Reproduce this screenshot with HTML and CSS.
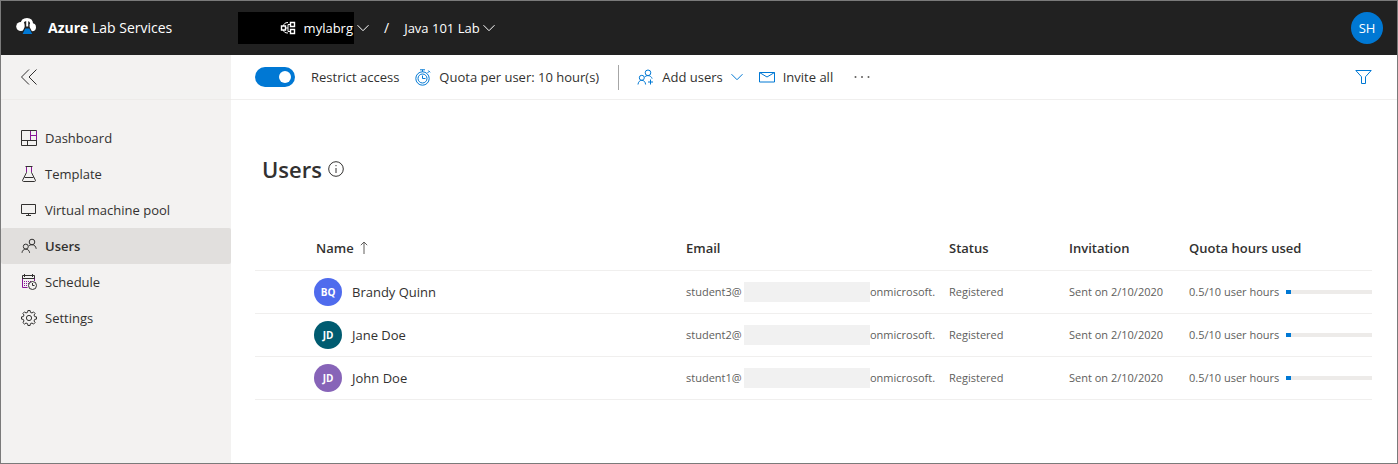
FILE: index.html
```html
<!DOCTYPE html>
<html lang="en">
<head>
<meta charset="utf-8">
<title>Users - Azure Lab Services</title>
<link rel="stylesheet" href="styles.css">
</head>
<body>
<svg class="sprite" aria-hidden="true">
  <symbol id="chevron" viewBox="0 0 12 8"><path d="M.5 1.2 6 6.7l5.5-5.5"/></symbol>
  <symbol id="people" viewBox="0 0 16 16"><circle cx="11" cy="4" r="2.8"/><circle cx="4.8" cy="8.6" r="2.5"/><path d="M1 14.8c.2-2.2 1.8-3.7 3.8-3.7s3.6 1.5 3.8 3.7M7.6 8.2C8.3 7.2 9.5 6.7 11 6.7c2.200 0 3.900 1.600 4.200 4.100"/></symbol>
</svg>
<header class="topbar">
  <div class="brand">
    <svg class="logo" width="20" height="17" viewBox="0 0 20 17" aria-hidden="true">
      <path d="M6 6.500C6.200 3 8 1.600 11 1.600S15.500 3 15.700 6.500" fill="none" stroke="#fff" stroke-width="3"/>
      <circle cx="4.800" cy="8.500" r="4.600" fill="#fff"/><circle cx="16" cy="9.200" r="4" fill="#fff"/>
      <path d="M8.600 4.500h5v4.500l4 7.500H5.200l3.400-7.500z" fill="#212121"/>
      <path d="M10.200 3h2v5.500h-2z" fill="#fff"/>
      <path d="M9.300 10.500h4l2.900 5.500H6.600z" fill="#0078d4"/>
    </svg>
    <span><b>Azure</b> Lab Services</span>
  </div>
  <nav class="crumbs" aria-label="Breadcrumb">
    <button class="crumb" type="button">
      <span class="group">
        <svg class="icon" width="16" height="14" viewBox="0 0 16 14" aria-hidden="true"><path d="M1.500 5h4v4h-4zM10.500 1.500h4v4h-4zM10.500 8.500h4v4h-4z" stroke-width="1.400"/><path d="M3.500 5C3.700 3 5 1.500 8 1.500M3.500 9c.2 2 1.500 3 4.500 3M5.500 7h2.500V3.500h2.500M8 7v3.500h2.500"/></svg>
        mylabrg
      </span>
      <svg class="icon" width="12" height="8" aria-hidden="true"><use href="#chevron"/></svg>
    </button>
    <span class="slash">/</span>
    <button class="crumb" type="button">Java 101 Lab <svg class="icon" width="12" height="8" aria-hidden="true"><use href="#chevron"/></svg></button>
  </nav>
  <button class="account" type="button" aria-label="Account SH">SH</button>
</header>
<div class="shell">
  <aside class="sidebar">
    <button class="collapse" type="button" aria-label="Collapse menu"><svg class="icon" width="16" height="16" viewBox="0 0 16 16" aria-hidden="true"><path d="M8 .5.500 8 8 15.500M15.500.5 8 8l7.500 7.500"/></svg></button>
    <nav class="menu" aria-label="Lab">
      <a class="item" href="#"><svg class="icon" width="16" height="16" viewBox="0 0 16 16" aria-hidden="true"><path d="M.5.500h15v15H.5zM.5 10.500h15M9.500.5v10M6.500 10.500v5"/><path class="accent" d="M9.500 5.500h6M9.500 1v9M15.500 1v9"/></svg>Dashboard</a>
      <a class="item" href="#"><svg class="icon" width="16" height="16" viewBox="0 0 16 16" aria-hidden="true"><path d="M4.500.5h7M5.500.5v6L1.700 14c-.4.900 0 1.500.8 1.500h11c.8 0 1.200-.6.800-1.500l-3.800-7.500v-6M3.500 11.500h9"/><path class="accent" d="M5.500 1v5M10.500 1v5"/></svg>Template</a>
      <a class="item" href="#"><svg class="icon" width="16" height="16" viewBox="0 0 16 16" aria-hidden="true"><path d="M.5 2.500h14v9H.5zM7.500 11.500v2M5 13.500h5"/></svg>Virtual machine pool</a>
      <a class="item current" href="#" aria-current="page"><svg class="icon" width="16" height="16" aria-hidden="true"><use href="#people"/></svg>Users</a>
      <a class="item" href="#"><svg class="icon" width="16" height="16" viewBox="0 0 16 16" aria-hidden="true"><path class="accent" d="M1.500 4v9.500h5M13.500 4v3"/><path d="M1.500 4.500v-3h12v3zM3.500 0v3M11.500 0v3"/><path class="accent" stroke-dasharray="1 1" d="M3 7.500h8M3 9.500h5M3 11.500h4"/><circle cx="11.500" cy="11.500" r="4"/><path d="M11.500 9v2.500h2"/></svg>Schedule</a>
      <a class="item" href="#"><svg class="icon" width="16" height="16" viewBox="0 0 16 16" aria-hidden="true"><path d="m6.600 2.300.3-1.800h2.200l.3 1.800 1.600.7 1.500-1.100 1.600 1.600L13 5l.7 1.600 1.800.3v2.200l-1.800.3L13 11l1.100 1.500-1.600 1.600L11 13l-1.600.7-.3 1.800H6.900l-.3-1.800L5 13l-1.500 1.100-1.600-1.600L3 11l-.7-1.600-1.800-.3V6.900l1.800-.3L3 5 1.900 3.500l1.600-1.600L5 3z"/><circle cx="8" cy="8" r="2.600"/></svg>Settings</a>
    </nav>
  </aside>
  <main class="main">
    <div class="toolbar">
      <label class="restrict"><input class="switch" type="checkbox" role="switch" checked>Restrict access</label>
      <button class="command quota" type="button"><svg class="icon" width="16" height="17" viewBox="0 0 16 17" aria-hidden="true"><circle cx="7.500" cy="9.500" r="6.700"/><circle cx="7.500" cy="9.500" r="4.500"/><path d="M5 .8h5M7.500.8v2M12.500 4l1.700-1.700M13.300 1.500l1.800 1.800M7.500 6.500v3h3"/></svg>Quota per user: 10 hour(s)</button>
      <span class="divider"></span>
      <button class="command add" type="button"><svg class="icon" width="17" height="17" viewBox="0 0 17 17" aria-hidden="true"><circle cx="11" cy="3.800" r="2.800"/><circle cx="4.800" cy="8.800" r="2.500"/><path d="M1 15.500c.2-2.600 1.800-4.200 3.800-4.200s3.600 1.600 3.800 4.200M7.500 8.300C8.300 7.100 9.500 6.600 11 6.600c2 0 3.500 1.200 4.100 3M13.500 10.500v5M11 13h5"/></svg>Add users<svg class="icon" width="12" height="8" aria-hidden="true"><use href="#chevron"/></svg></button>
      <button class="command" type="button"><svg class="icon" width="16" height="12" viewBox="0 0 16 12" aria-hidden="true"><path d="M.5 1.500h15v9.500H.5zM.5 1.500 8 6l7.500-4.500"/></svg>Invite all</button>
      <button class="command more" type="button" aria-label="More"><svg width="16" height="4" viewBox="0 0 16 4" fill="#605e5c" aria-hidden="true"><circle cx="1.500" cy="2" r="1"/><circle cx="8" cy="2" r="1"/><circle cx="14.500" cy="2" r="1"/></svg></button>
      <button class="command filter" type="button" aria-label="Filter"><svg class="icon" width="17" height="16" viewBox="0 0 17 16" aria-hidden="true"><path d="M.8 1.500h15.400l-5.700 6.300v6.700h-4V7.800z"/></svg></button>
    </div>
    <section class="content">
      <div class="heading"><h1>Users</h1><svg class="icon info" width="16" height="16" viewBox="0 0 16 16" aria-hidden="true"><circle cx="8" cy="8" r="7.300"/><path d="M8 7v5M8 4v1.200"/></svg></div>
      <table class="users">
        <colgroup><col class="c-check"><col><col class="c-email"><col class="c-short"><col class="c-short"><col class="c-quota"></colgroup>
        <thead><tr><td></td><th scope="col" aria-sort="ascending"><button class="sort" type="button">Name<svg class="icon" width="8" height="13" viewBox="0 0 8 13" aria-hidden="true"><path d="M4 13V1M.8 4.200 4 1l3.200 3.200"/></svg></button></th><th scope="col">Email</th><th scope="col">Status</th><th scope="col">Invitation</th><th scope="col">Quota hours used</th></tr></thead>
        <tbody>
          <tr><td></td><td><div class="person"><span class="avatar blue">BQ</span>Brandy Quinn</div></td><td><div class="email"><span class="local">student3@</span><span class="mask"></span>onmicrosoft.</div></td><td>Registered</td><td>Sent on 2/10/2020</td><td><div class="usage"><label for="q3">0.5/10 user hours</label><progress id="q3" value="0.5" max="10"></progress></div></td></tr>
          <tr><td></td><td><div class="person"><span class="avatar teal">JD</span>Jane Doe</div></td><td><div class="email"><span class="local">student2@</span><span class="mask"></span>onmicrosoft.</div></td><td>Registered</td><td>Sent on 2/10/2020</td><td><div class="usage"><label for="q2">0.5/10 user hours</label><progress id="q2" value="0.5" max="10"></progress></div></td></tr>
          <tr><td></td><td><div class="person"><span class="avatar purple">JD</span>John Doe</div></td><td><div class="email"><span class="local">student1@</span><span class="mask"></span>onmicrosoft.</div></td><td>Registered</td><td>Sent on 2/10/2020</td><td><div class="usage"><label for="q1">0.5/10 user hours</label><progress id="q1" value="0.5" max="10"></progress></div></td></tr>
        </tbody>
      </table>
    </section>
  </main>
</div>
</body>
</html>
```

FILE: styles.css
```css
* { box-sizing: border-box; }

body {
  margin: 0;
  min-height: 100vh;
  display: flex;
  flex-direction: column;
  border: 1px solid #7a7a7a;
  background: #fff;
  color: #323130;
  font: 13px/20px "Segoe UI", "Open Sans", "Noto Sans", sans-serif;
}

button {
  padding: 0;
  border: 0;
  background: none;
  color: inherit;
  font: inherit;
  white-space: nowrap;
}

.sprite { display: none; }

.icon {
  flex: none;
  fill: none;
  stroke: currentColor;
  stroke-width: 1;
}

.accent { stroke: #881798; }

.topbar {
  display: flex;
  align-items: center;
  height: 54px;
  padding: 0 14px 0 15px;
  background: #212121;
  color: #fff;
}

.brand {
  flex: none;
  display: flex;
  align-items: center;
  gap: 12px;
  width: 222px;
  font-size: 14px;
}

.logo { margin-bottom: 4px; }

.crumbs {
  display: flex;
  align-items: center;
  gap: 15px;
}

.crumb {
  display: flex;
  align-items: center;
  gap: 3px;
}

.group {
  display: flex;
  align-items: center;
  justify-content: flex-end;
  gap: 8px;
  width: 116px;
  height: 32px;
  padding-right: 1px;
  background: #000;
}

.slash { font-size: 14px; }

.account {
  width: 32px;
  height: 32px;
  margin-left: auto;
  border-radius: 50%;
  background: #0078d4;
}

.shell {
  flex: 1;
  display: flex;
}

.sidebar {
  flex: none;
  width: 230px;
  background: #f3f2f1;
}

.collapse {
  display: flex;
  align-items: center;
  width: 100%;
  height: 45px;
  padding-left: 20px;
  border-bottom: 1px solid #edebe9;
}

.menu { padding-top: 20px; }

.item {
  display: flex;
  align-items: center;
  gap: 8px;
  height: 36px;
  padding-left: 20px;
  border-radius: 2px;
  color: #323130;
  text-decoration: none;
}

.current {
  background: #e1dfdd;
  font-weight: 600;
}

.main {
  flex: 1;
  min-width: 0;
}

.toolbar {
  display: flex;
  align-items: center;
  height: 45px;
  padding: 0 25px 0 24px;
  border-bottom: 1px solid #f0efee;
}

.restrict {
  display: flex;
  align-items: center;
  gap: 16px;
  white-space: nowrap;
}

.switch {
  appearance: none;
  display: flex;
  align-items: center;
  justify-content: flex-end;
  width: 40px;
  height: 20px;
  margin: 0;
  padding: 0 4px;
  border-radius: 10px;
  background: #0078d4;
}

.switch::before {
  content: "";
  width: 12px;
  height: 12px;
  border-radius: 50%;
  background: #fff;
}

.switch:not(:checked) {
  justify-content: flex-start;
  background: #605e5c;
}

.command {
  display: flex;
  align-items: center;
  gap: 8px;
}

.command .icon { color: #0078d4; }

.quota { margin-left: 16px; }

.divider {
  width: 1px;
  height: 25px;
  margin: 0 18px 0 19px;
  background: #a6a6a6;
}

.add { margin-right: 16px; }

.more { margin-left: 21px; }

.filter { margin-left: auto; }

.content { padding: 53px 25px 24px 24px; }

.heading {
  display: flex;
  align-items: center;
  gap: 6px;
  padding-left: 7px;
}

h1 {
  margin: 0;
  font-size: 22px;
  font-weight: 600;
  line-height: 32px;
}

.users {
  width: 100%;
  margin-top: 41px;
  border-collapse: collapse;
  table-layout: fixed;
}

.c-check { width: 61px; }
.c-email { width: 263px; }
.c-short { width: 120px; }
.c-quota { width: 183px; }

th, td {
  height: 43px;
  padding: 0;
  border-bottom: 1px solid #f0efee;
  text-align: left;
  white-space: nowrap;
}

th { font-weight: 600; }

thead td, th { height: 44px; }

td {
  color: #605e5c;
  font-size: 11px;
}

.sort {
  display: flex;
  align-items: center;
  gap: 6px;
}

.sort .icon { color: #605e5c; }

.person {
  display: flex;
  align-items: center;
  gap: 10px;
  margin-left: -2px;
  color: #323130;
  font-size: 13px;
}

.avatar {
  width: 28px;
  height: 28px;
  border-radius: 50%;
  color: #fff;
  font-size: 10px;
  font-weight: 700;
  line-height: 28px;
  text-align: center;
}

.blue { background: #4f6bed; }
.teal { background: #005b70; }
.purple { background: #8764b8; }

.email {
  display: flex;
  align-items: center;
  margin-right: 12px;
}

.local {
  flex: none;
  width: 58px;
}

.mask {
  flex: none;
  width: 126px;
  height: 20px;
  background: #f1f1f1;
}

.usage {
  display: flex;
  align-items: center;
  gap: 7px;
}

progress {
  appearance: none;
  flex: 1;
  min-width: 0;
  height: 4px;
  border: 0;
}

progress::-webkit-progress-bar { background: #edebe9; }
progress::-webkit-progress-value { background: #0078d4; }
```
